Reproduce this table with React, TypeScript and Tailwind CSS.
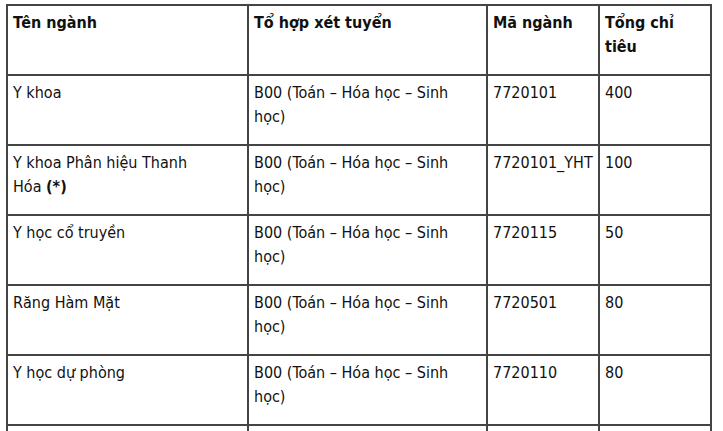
import React from 'react';

const rows: { name: React.ReactNode; code: string; quota: string }[] = [
    { name: 'Y khoa', code: '7720101', quota: '400' },
    {
        name: (
            <>
                Y khoa Phân hiệu Thanh
                <br />
                Hóa <strong>(*)</strong>
            </>
        ),
        code: '7720101_YHT',
        quota: '100',
    },
    { name: 'Y học cổ truyền', code: '7720115', quota: '50' },
    { name: 'Răng Hàm Mặt', code: '7720501', quota: '80' },
    { name: 'Y học dự phòng', code: '7720110', quota: '80' },
];

const cell = 'h-[70px] border-r-2 border-b-2 border-[#444] px-[5px] pt-[5px] leading-[24px]';

export default function App() {
    return (
        <div className="h-[431px] overflow-hidden bg-white pl-[6px] pt-[4px] text-[16px] text-[#111] [font-family:'DejaVu_Sans_Condensed','DejaVu_Sans',sans-serif]">
            <div className="grid w-[706px] grid-cols-[241px_239px_112px_112px] border-t-2 border-l-2 border-[#444]">
                {/* header */}
                <div className={`${cell} font-bold`}>Tên ngành</div>
                <div className={`${cell} font-bold`}>Tổ hợp xét tuyển</div>
                <div className={`${cell} font-bold`}>Mã ngành</div>
                <div className={`${cell} font-bold`}>
                    Tổng chỉ
                    <br />
                    tiêu
                </div>

                {rows.map((r) => (
                    <React.Fragment key={r.code}>
                        <div className={cell}>{r.name}</div>
                        <div className={cell}>
                            B00 (Toán – Hóa học – Sinh
                            <br />
                            học)
                        </div>
                        <div className={cell}>{r.code}</div>
                        <div className={cell}>{r.quota}</div>
                    </React.Fragment>
                ))}

                {/* next row, cut off by the bottom edge */}
                <div className={cell} />
                <div className={cell} />
                <div className={cell} />
                <div className={cell} />
            </div>
        </div>
    );
}
